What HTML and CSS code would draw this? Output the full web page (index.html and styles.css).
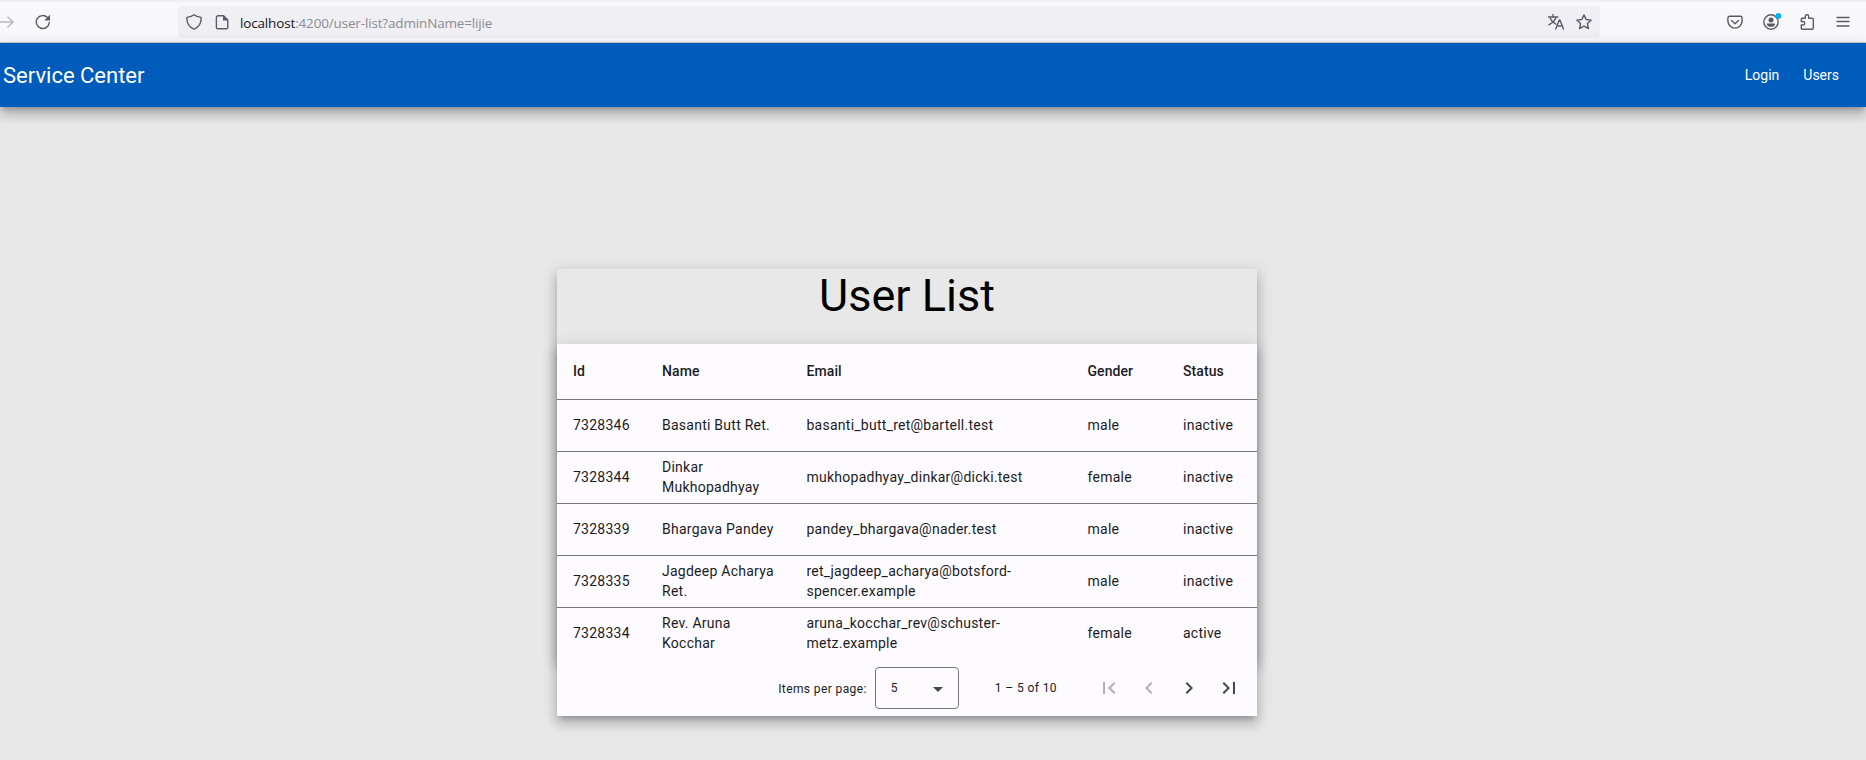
FILE: index.html
```html
<!DOCTYPE html>
<html lang="en">
<head>
<meta charset="utf-8">
<title>Service Center</title>
<link rel="stylesheet" href="styles.css">
</head>
<body>
<div class="browser-bar">
  <div class="nav-icons">
    <svg class="forward" width="16" height="16" viewBox="0 0 16 16"><path d="M0 8h13.300M7.500 2.700l5.600 5.300L7.500 13.300"/></svg>
    <svg class="icon reload" width="16" height="16" viewBox="0 0 16 16"><path d="M14.300 8.500A6.500 6.500 0 1 1 12.300 3.300L13.500 4.500"/><path class="solid" d="M15 .8v5.700H9.300z"/></svg>
  </div>
  <div class="url-bar">
    <svg class="icon" width="16" height="16" viewBox="0 0 16 16"><path d="M8 .8C6 2.300 3.800 2.900 1.700 3.100 1 3.200.8 3.600.8 4.200c.1 5 2.300 8.900 7.200 11 4.900-2.100 7.100-6 7.200-11 0-.6-.2-1-.9-1.100C12.200 2.900 10 2.300 8 .8z"/></svg>
    <svg class="icon doc" width="16" height="16" viewBox="0 0 16 16"><path d="M4 1.800h5.500l4.300 4.300v7.100a1.600 1.600 0 0 1-1.600 1.600H4a1.600 1.600 0 0 1-1.600-1.600V3.400A1.600 1.600 0 0 1 4 1.800z"/><path class="solid" d="M9 1.500v5h5z"/></svg>
    <span class="url"><b>localhost</b>:4200/user-list?adminName=lijie</span>
    <svg class="icon translate" width="16" height="16" viewBox="0 0 16 16"><path d="M0 3h9.800M5 .6V3M8 3C7 6.500 4.500 9 .8 10.800M2.400 4.500C3.500 7.200 5.500 9.200 7.800 10.200M7.700 15l3.600-9h.6l3.600 9M8.900 12h5.400"/></svg>
    <svg class="icon" width="16" height="16" viewBox="0 0 16 16"><path d="M8 .9l2.100 4.600 5.100.6-3.800 3.400 1 5.100L8 12.100l-4.400 2.500 1-5.100L.8 6.100l5.100-.6z"/></svg>
  </div>
  <div class="tools">
    <svg class="icon" width="16" height="16" viewBox="0 0 16 16"><path d="M2.600 2.200h10.800a1.700 1.700 0 0 1 1.700 1.700V7A7.100 7.100 0 0 1 .9 7V3.900a1.700 1.700 0 0 1 1.700-1.700zM4.500 6.500L8 9.800l3.500-3.300"/></svg>
    <svg class="icon account" width="20" height="18" viewBox="0 0 20 18"><circle cx="8" cy="9" r="7.200"/><circle class="solid" cx="8" cy="7" r="2.500"/><path class="solid" d="M4 10.500h8v1.200a3 3 0 0 1-3 2H7a3 3 0 0 1-3-2z"/><circle class="dot" cx="15.400" cy="2.900" r="2.900"/></svg>
    <svg class="icon puzzle" width="16" height="16" viewBox="0 0 16 16"><path d="M2.300 7.500V5.200q0-1 1-1h3V2.500a1.700 1.700 0 0 1 3.400 0v1.700h3.600q1 0 1 1v9q0 1-1 1h-10q-1 0-1-1V11H4a1.700 1.700 0 0 0 0-3.500z"/></svg>
    <svg class="icon" width="16" height="16" viewBox="0 0 16 16"><path d="M2 3.500h12M2 7.500h12M2 12h12"/></svg>
  </div>
</div>
<header class="toolbar">
  <span class="brand">Service Center</span>
  <nav class="links"><a>Login</a><a>Users</a></nav>
</header>
<main class="card">
  <h1>User List</h1>
  <table class="users">
    <colgroup><col class="c-id"><col class="c-name"><col class="c-email"><col class="c-gender"><col class="c-status"></colgroup>
    <thead><tr><th>Id</th><th>Name</th><th>Email</th><th>Gender</th><th>Status</th></tr></thead>
    <tbody>
      <tr><td>7328346</td><td>Basanti Butt Ret.</td><td>basanti_butt_ret@bartell.test</td><td>male</td><td>inactive</td></tr>
      <tr><td>7328344</td><td>Dinkar<br>Mukhopadhyay</td><td>mukhopadhyay_dinkar@dicki.test</td><td>female</td><td>inactive</td></tr>
      <tr><td>7328339</td><td>Bhargava Pandey</td><td>pandey_bhargava@nader.test</td><td>male</td><td>inactive</td></tr>
      <tr><td>7328335</td><td>Jagdeep Acharya<br>Ret.</td><td>ret_jagdeep_acharya@botsford-<br>spencer.example</td><td>male</td><td>inactive</td></tr>
      <tr><td>7328334</td><td>Rev. Aruna<br>Kocchar</td><td>aruna_kocchar_rev@schuster-<br>metz.example</td><td>female</td><td>active</td></tr>
    </tbody>
  </table>
  <div class="paginator">
    <span class="label">Items per page:</span>
    <div class="select"><span>5</span><svg width="10" height="5" viewBox="0 0 10 5"><path d="M0 0h10L5 5z"/></svg></div>
    <span class="range">1 – 5 of 10</span>
    <div class="pages">
      <svg class="off" viewBox="0 0 24 24"><path d="M18.410 16.590L13.820 12l4.590-4.590L17 6l-6 6 6 6zM6 6h2v12H6z"/></svg>
      <svg class="off" viewBox="0 0 24 24"><path d="M15.410 7.410L14 6l-6 6 6 6 1.410-1.410L10.830 12z"/></svg>
      <svg viewBox="0 0 24 24"><path d="M10 6L8.590 7.410 13.170 12l-4.580 4.590L10 18l6-6z"/></svg>
      <svg viewBox="0 0 24 24"><path d="M5.590 7.410L10.180 12l-4.590 4.590L7 18l6-6-6-6zM16 6h2v12h-2z"/></svg>
    </div>
  </div>
</main>
</body>
</html>
```
FILE: styles.css
```css
* { box-sizing: border-box; }
body {
  margin: 0;
  height: 760px;
  overflow: hidden;
  background: #e8e8e8;
  font-family: Roboto, "Liberation Sans", sans-serif;
  color: #1b1b1f;
}
.browser-bar {
  display: flex;
  align-items: center;
  height: 43px;
  background: #f9f9fb;
  border-top: 2px solid #f0f0f4;
  border-bottom: 1px solid #ccc;
}
.icon { fill: none; stroke: #5b5b66; stroke-width: 1.4; stroke-linejoin: round; stroke-linecap: round; flex: none; }
.icon .solid { fill: #5b5b66; stroke: none; }
.icon .dot { fill: #00b3f4; stroke: none; }
.nav-icons { display: flex; align-items: center; width: 178px; }
.forward { fill: none; stroke: #b9b9be; stroke-width: 1.5; }
.reload { margin-left: 19px; }
.url-bar {
  display: flex;
  align-items: center;
  width: 1422px;
  height: 32px;
  padding: 0 8px;
  border-radius: 4px;
  background: #f0f0f4;
}
.doc { margin-left: 12px; }
.url {
  flex: 1;
  margin: 2px 0 0 10px;
  font: 13.500px/20px "Open Sans", "Noto Sans", sans-serif;
  letter-spacing: -0.16px;
  color: #8b8b92;
}
.url b { font-weight: 400; color: #15141a; }
.translate { margin-right: 12px; }
.tools { display: flex; align-items: center; margin-left: 127px; gap: 20px; }
.account { margin-right: -4px; }
.toolbar {
  position: relative;
  display: flex;
  align-items: center;
  justify-content: space-between;
  height: 64px;
  padding: 0 27px 0 3px;
  background: #005cbb;
  color: #fff;
  box-shadow: 0 5px 5px -3px rgba(0,0,0,.2), 0 8px 10px 1px rgba(0,0,0,.14), 0 3px 14px 2px rgba(0,0,0,.12);
}
.brand { padding-top: 2px; font-size: 22px; line-height: 28px; }
.links { display: flex; gap: 24px; font-size: 14px; line-height: 20px; }
.card {
  width: 700px;
  height: 447px;
  margin: 162px 0 0 557px;
  box-shadow: 0 5px 5px -3px rgba(0,0,0,.2), 0 8px 10px 1px rgba(0,0,0,.14), 0 3px 14px 2px rgba(0,0,0,.12);
}
h1 { margin: 0 0 22px; padding-top: 1px; font-size: 45px; line-height: 52px; font-weight: 400; text-align: center; color: #000; }
.users {
  width: 700px;
  table-layout: fixed;
  border-collapse: separate;
  border-spacing: 0;
  background: #fdfbff;
  font-size: 14px;
  line-height: 20px;
  letter-spacing: .25px;
  box-shadow: 0 5px 5px -3px rgba(0,0,0,.2), 0 8px 10px 1px rgba(0,0,0,.14), 0 3px 14px 2px rgba(0,0,0,.12);
}
.c-id { width: 89px; }
.c-name { width: 144.500px; }
.c-email { width: 281px; }
.c-gender { width: 95.500px; }
.c-status { width: 90px; }
th, td { padding: 0 0 2px 16px; text-align: left; white-space: nowrap; border-bottom: 1px solid #74777f; }
th { height: 56px; font-weight: 500; letter-spacing: .08px; }
td { height: 52px; }
tbody tr:last-child td { border-bottom: 0; }
.paginator {
  position: relative;
  display: flex;
  align-items: center;
  justify-content: flex-end;
  height: 56px;
  padding-right: 8px;
  background: #fdfbff;
  font-size: 12px;
  letter-spacing: .4px;
}
.label { margin-right: 8px; padding-top: 2px; }
.select {
  display: flex;
  align-items: center;
  justify-content: space-between;
  width: 84px;
  height: 42px;
  padding: 0 15px;
  border: 1px solid #74777f;
  border-radius: 4px;
}
.select svg { fill: #44474e; margin-top: 2px; }
.range { margin: 0 32px 0 36px; }
.pages { display: flex; }
.pages svg { width: 40px; height: 40px; padding: 8px; fill: #44474e; }
.pages .off { fill: #afaeb3; }
```
